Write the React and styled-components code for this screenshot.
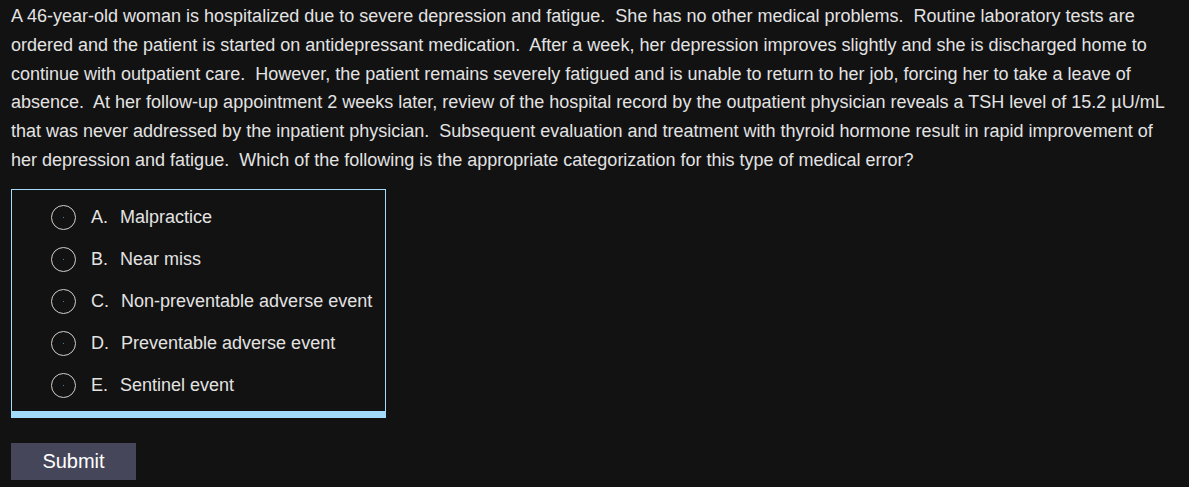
import styled, { createGlobalStyle } from "styled-components";

const GlobalStyle = createGlobalStyle`
  body {
    margin: 0;
    background-color: #121212;
    font-family: "Liberation Sans", Arial, sans-serif;
  }
`;

const Page = styled.main`
  padding: 2px 15px 0 11px;
  color: #e3e3e3;
`;

const Stem = styled.p`
  margin: 0 0 14px;
  font-size: 18px;
  line-height: 28.8px;
  white-space: pre-wrap;
`;

const Choices = styled.div`
  display: inline-flex;
  flex-direction: column;
  padding: 7px 13px 4px 39px;
  border: 1px solid #a3dbfd;
  border-bottom: 7px solid #a3dbfd;
`;

const Choice = styled.label`
  display: flex;
  align-items: center;
  height: 42px;
  font-size: 18px;
  cursor: pointer;
`;

const Radio = styled.span`
  position: relative;
  width: 23px;
  height: 23px;
  border: 1px solid #cfcfcf;
  border-radius: 50%;
  margin-right: 15px;
  flex-shrink: 0;

  &::after {
    content: "";
    position: absolute;
    left: 11px;
    top: 11px;
    width: 1px;
    height: 1px;
    background: #3f7fae;
  }
`;

const Letter = styled.span`
  margin-right: 12px;
`;

const SubmitButton = styled.button`
  display: block;
  margin-top: 25px;
  width: 125px;
  height: 37px;
  border: none;
  background-color: #46465a;
  color: #ffffff;
  font-family: "Liberation Sans", Arial, sans-serif;
  font-size: 20px;
  cursor: pointer;
`;

const options = [
  ["A", "Malpractice"],
  ["B", "Near miss"],
  ["C", "Non-preventable adverse event"],
  ["D", "Preventable adverse event"],
  ["E", "Sentinel event"],
];

const App = () => {
  return (
    <Page>
      <GlobalStyle />
      <Stem>
        A 46-year-old woman is hospitalized due to severe depression and fatigue.  She has no other medical problems.  Routine laboratory tests are ordered and the patient is started on antidepressant medication.  After a week, her depression improves slightly and she is discharged home to continue with outpatient care.  However, the patient remains severely fatigued and is unable to return to her job, forcing her to take a leave of absence.  At her follow-up appointment 2 weeks later, review of the hospital record by the outpatient physician reveals a TSH level of 15.2 µU/mL that was never addressed by the inpatient physician.  Subsequent evaluation and treatment with thyroid hormone result in rapid improvement of her depression and fatigue.  Which of the following is the appropriate categorization for this type of medical error?
      </Stem>
      <Choices>
        {options.map(([letter, text]) => (
          <Choice key={letter}>
            <Radio />
            <Letter>{letter}.</Letter>
            {text}
          </Choice>
        ))}
      </Choices>
      <SubmitButton>Submit</SubmitButton>
    </Page>
  );
};

export default App;
